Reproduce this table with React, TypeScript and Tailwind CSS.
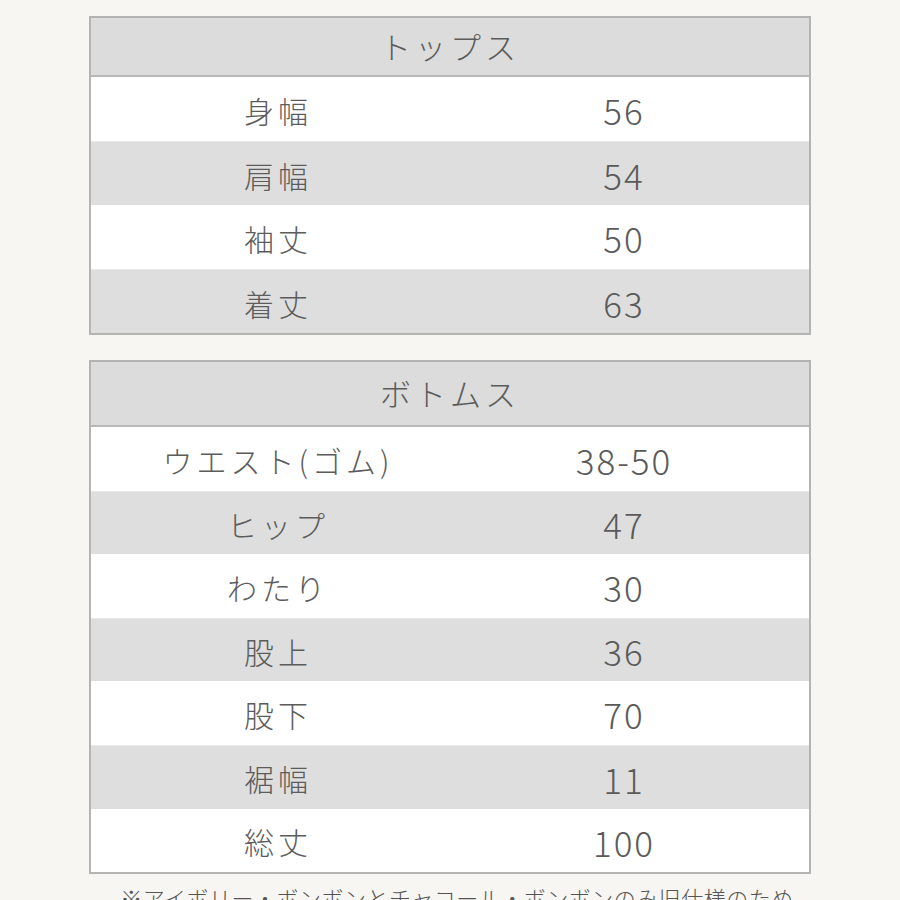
import React from "react";

const cjk = { fontFamily: '"Noto Sans CJK JP", "Noto Sans", sans-serif' };

type Row = [string, string];

function Table({
  title,
  rows,
  headH,
  rowH,
}: {
  title: string;
  rows: Row[];
  headH: string;
  rowH: string;
}) {
  return (
    <div className="shrink-0 w-[722px] border-2 border-[#b4b4b2] bg-white">
      <div
        className={
          headH +
          " bg-[#dcdcdc] border-b-2 border-[#b8b8b6] flex items-center justify-center text-[31px] font-light tracking-[4px] text-[#5c5c5c]"
        }
      >
        {title}
      </div>
      {rows.map(([k, v], i) => (
        <div
          key={k}
          className={
            rowH +
            " flex items-center text-[#5c5c5c] " +
            (i % 2 === 1 ? "bg-[#dedede] border-t border-[#e8e8e8]" : "bg-white")
          }
        >
          <div className="w-[374px] text-center text-[30px] font-light tracking-[4px] pt-[3px]">{k}</div>
          <div className="w-[318px] text-center text-[35px] font-light text-[#5a5a5a] tracking-[2px] pt-[3px]">
            {v}
          </div>
        </div>
      ))}
    </div>
  );
}

export default function App() {
  return (
    <div
      style={cjk}
      className="w-[900px] h-[900px] overflow-hidden bg-[#f7f6f2] flex flex-col items-center pt-[16px]"
    >
      <Table
        title="トップス"
        headH="h-[59px]"
        rowH="h-[64px]"
        rows={[
          ["身幅", "56"],
          ["肩幅", "54"],
          ["袖丈", "50"],
          ["着丈", "63"],
        ]}
      />
      <div className="shrink-0 h-[25px]" />
      <Table
        title="ボトムス"
        headH="h-[65px]"
        rowH="h-[63.6px]"
        rows={[
          ["ウエスト(ゴム)", "38-50"],
          ["ヒップ", "47"],
          ["わたり", "30"],
          ["股上", "36"],
          ["股下", "70"],
          ["裾幅", "11"],
          ["総丈", "100"],
        ]}
      />
      <div className="shrink-0 mt-[7px] text-[22px] font-light tracking-[0.5px] text-[#555] whitespace-nowrap pl-[14px]">
        ※アイボリー・ボンボンとチャコール・ボンボンのみ旧仕様のため
      </div>
    </div>
  );
}
